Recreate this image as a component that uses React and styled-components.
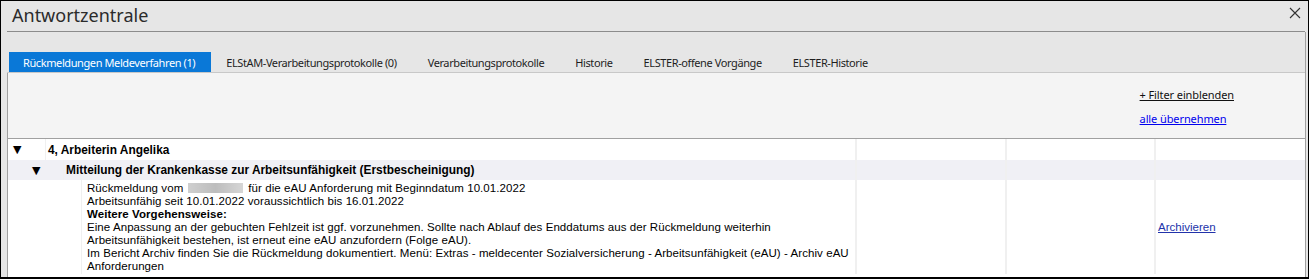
import React from 'react'
import styled, {createGlobalStyle} from 'styled-components'

const GlobalStyle = createGlobalStyle`
    html, body {
        margin: 0;
        padding: 0;
        background: #ffffff;
    }
    body {
        font-family: "Noto Sans", "Liberation Sans", sans-serif;
    }
`

const Window = styled.div`
    width: 1309px;
    height: 279px;
    box-sizing: border-box;
    border: 1px solid #000;
    border-bottom-width: 2px;
    background: #e6e6e6;
    display: flex;
    flex-direction: column;
    overflow: hidden;
`

const TitleBar = styled.div`
    display: flex;
    align-items: center;
    justify-content: space-between;
    height: 30px;
    margin: 0 3px 0 6px;
    border-bottom: 1px solid #8c8c8c;
    padding: 0 3px 0 5px;
`

const Title = styled.h1`
    margin: 0;
    font-family: "Noto Sans", sans-serif;
    font-size: 18px;
    font-weight: 400;
    color: #2b2b2b;
    line-height: 22px;
    padding-bottom: 3px;
`

const CloseButton = styled.button`
    border: none;
    background: transparent;
    padding: 0;
    width: 14px;
    height: 14px;
    display: flex;
    align-items: center;
    justify-content: center;
    align-self: flex-start;
    margin-top: 5px;
    cursor: pointer;
`

const Body = styled.div`
    flex: 1;
    display: flex;
    flex-direction: column;
    margin: 0 2px 0 6px;
    border-right: 1px solid #a0a0a0;
    min-height: 0;
`

const TabBar = styled.div`
    display: flex;
    align-items: flex-end;
    height: 40px;
    padding-left: 2px;
    border-bottom: 1px solid #c8c8c8;
`

const Tab = styled.div`
    height: 20px;
    padding: 0 16px 0 14px;
    display: flex;
    align-items: center;
    font-family: "Noto Sans", sans-serif;
    font-size: 11px;
    letter-spacing: -0.4px;
    color: ${props => props.active ? '#ffffff' : '#1e1e1e'};
    background: ${props => props.active ? '#0a78d7' : 'transparent'};
    white-space: nowrap;
    margin-right: 1px;
`

const Content = styled.div`
    flex: 1;
    background: #f4f4f4;
    display: flex;
    flex-direction: column;
    border-left: 1px solid #a0a0a0;
    min-height: 0;
`

const Actions = styled.div`
    align-self: flex-end;
    margin-right: 71px;
    padding-top: 15px;
    height: 65px;
    box-sizing: border-box;
    display: flex;
    flex-direction: column;
    align-items: flex-start;
    gap: 11px;
    flex: none;
`

const ActionLink = styled.a`
    font-family: "Noto Sans", sans-serif;
    font-size: 11px;
    letter-spacing: -0.1px;
    line-height: 13px;
    color: ${props => props.plain ? '#111111' : '#0000ee'};
    text-decoration: underline;
    cursor: pointer;
`

const Table = styled.div`
    flex: 1;
    background: #ffffff;
    border-top: 1px solid #a0a0a0;
    display: flex;
    flex-direction: column;
    font-family: "Liberation Sans", Arial, sans-serif;
    font-size: 11.5px;
    color: #000;
`

const Row = styled.div`
    display: flex;
    flex: none;
    background: ${props => props.shaded ? '#f0f0f5' : '#ffffff'};
    height: ${props => props.h || 20}px;
`

const TreeCell = styled.div`
    width: ${props => props.w}px;
    flex: none;
    display: flex;
    align-items: center;
    padding-left: ${props => props.pl || 0}px;
    box-sizing: border-box;
    font-family: "DejaVu Sans", sans-serif;
    font-size: 11px;
    color: #000;
`

const MainCell = styled.div`
    flex: 1;
    min-width: 0;
    border-left: 1px solid #f0f0f0;
    padding: ${props => props.pad || '0 0 0 2px'};
    display: flex;
    flex-direction: column;
    justify-content: ${props => props.top ? 'flex-start' : 'center'};
    font-weight: ${props => props.bold ? 700 : 400};
    font-size: ${props => props.bold ? '11.9px' : '11.5px'};
`

const ValueCell = styled.div`
    width: ${props => props.w}px;
    flex: none;
    border-left: 2px solid #f0f0f0;
    box-sizing: border-box;
    display: flex;
    align-items: center;
    padding-left: 2px;
`

const Line = styled.div`
    line-height: 13px;
    white-space: nowrap;
    letter-spacing: 0.07px;
    font-weight: ${props => props.bold ? 700 : 400};
`

const Redacted = styled.span`
    display: inline-block;
    width: 55px;
    height: 10px;
    margin: 0 5px -1px 5px;
    background: linear-gradient(90deg, #cfcfcf, #bdbdbd 50%, #d6d6d6);
    filter: blur(0.6px);
`

const ArchiveLink = styled.a`
    color: #2233aa;
    text-decoration: underline;
    font-size: 11.5px;
    cursor: pointer;
`

const BottomGap = styled.div`
    flex: 1;
`

const tabs = [
    'Rückmeldungen Meldeverfahren (1)',
    'ELStAM-Verarbeitungsprotokolle (0)',
    'Verarbeitungsprotokolle',
    'Historie',
    'ELSTER-offene Vorgänge',
    'ELSTER-Historie',
]

const Cols = ({children}) => (
    <>
        <ValueCell w={150} />
        <ValueCell w={149} />
        <ValueCell w={151}>{children}</ValueCell>
    </>
)

export default function App() {
    return (
        <>
            <GlobalStyle />
            <Window>
                <TitleBar>
                    <Title>Antwortzentrale</Title>
                    <CloseButton aria-label="Schließen">
                        <svg width="12" height="12" viewBox="0 0 12 12">
                            <path d="M1 1 L11 11 M11 1 L1 11" stroke="#333" strokeWidth="1.1" fill="none" />
                        </svg>
                    </CloseButton>
                </TitleBar>
                <Body>
                    <TabBar>
                        {tabs.map((t, i) => (
                            <Tab key={t} active={i === 0}>{t}</Tab>
                        ))}
                    </TabBar>
                    <Content>
                        <Actions>
                            <ActionLink plain>+ Filter einblenden</ActionLink>
                            <ActionLink>alle übernehmen</ActionLink>
                        </Actions>
                        <Table>
                            <Row h={21}>
                                <TreeCell w={37} pl={5}>▼</TreeCell>
                                <MainCell bold>4, Arbeiterin Angelika</MainCell>
                                <Cols />
                            </Row>
                            <Row shaded>
                                <TreeCell w={55} pl={24}>▼</TreeCell>
                                <MainCell bold>Mitteilung der Krankenkasse zur Arbeitsunfähigkeit (Erstbescheinigung)</MainCell>
                                <Cols />
                            </Row>
                            <Row h={94}>
                                <TreeCell w={73} />
                                <MainCell top pad="2px 0 0 5px">
                                    <Line>Rückmeldung vom<Redacted />für die eAU Anforderung mit Beginndatum 10.01.2022</Line>
                                    <Line>Arbeitsunfähig seit 10.01.2022 voraussichtlich bis 16.01.2022</Line>
                                    <Line bold>Weitere Vorgehensweise:</Line>
                                    <Line>Eine Anpassung an der gebuchten Fehlzeit ist ggf. vorzunehmen. Sollte nach Ablauf des Enddatums aus der Rückmeldung weiterhin</Line>
                                    <Line>Arbeitsunfähigkeit bestehen, ist erneut eine eAU anzufordern (Folge eAU).</Line>
                                    <Line>Im Bericht Archiv finden Sie die Rückmeldung dokumentiert. Menü: Extras - meldecenter Sozialversicherung - Arbeitsunfähigkeit (eAU) - Archiv eAU</Line>
                                    <Line>Anforderungen</Line>
                                </MainCell>
                                <Cols>
                                    <ArchiveLink>Archivieren</ArchiveLink>
                                </Cols>
                            </Row>
                            <BottomGap />
                        </Table>
                    </Content>
                </Body>
            </Window>
        </>
    )
}
